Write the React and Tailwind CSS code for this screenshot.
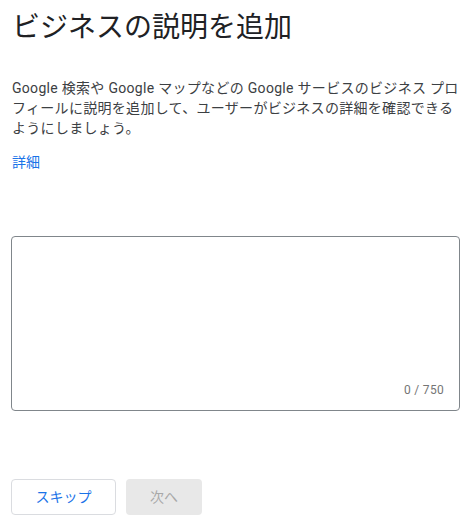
import React from "react";

const App = () => {
    return (
        <div className="w-[473px] h-[525px] bg-white px-[12px] pt-[8px] font-['Roboto','Noto_Sans_CJK_JP',sans-serif]">
            <h1 className="text-[28px] leading-[40px] text-[#202124] font-normal">ビジネスの説明を追加</h1>
            <p className="mt-[30px] text-[14px] leading-[20px] tracking-[0.3px] text-[#3c4043]">
                Google 検索や Google マップなどの Google サービスのビジネス プロフィールに説明を追加して、ユーザーがビジネスの詳細を確認できるようにしましょう。
            </p>
            <a href="#" className="block mt-[14px] text-[14px] leading-[20px] text-[#1a73e8]">詳細</a>

            <div className="mt-[64px] -ml-[1px] w-[449px] h-[175px] border border-[#80868b] rounded-[4px] flex flex-col justify-end">
                <textarea className="flex-1 resize-none outline-none px-3 pt-3 text-[14px]" />
                <div className="text-right text-[12px] leading-[16px] tracking-[0.3px] text-[#757575] pr-[15px] pb-[12px]">0 / 750</div>
            </div>

            <div className="mt-[68px] -ml-[1px] flex gap-[10px]">
                <button className="w-[105px] h-[36px] border border-[#dadce0] rounded-[4px] text-[14px] text-[#1a73e8]">スキップ</button>
                <button className="w-[76px] h-[36px] rounded-[4px] bg-[#e8e8e8] text-[14px] text-[#a8a8a8]">次へ</button>
            </div>
        </div>
    );
};

export default App;
